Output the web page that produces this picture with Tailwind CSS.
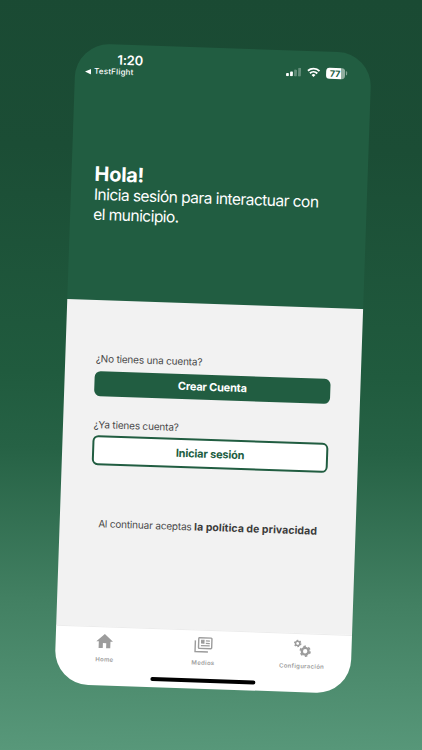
<!DOCTYPE html>
<html lang="es">
<head>
    <meta charset="UTF-8">
    <meta name="viewport" content="width=device-width, initial-scale=1.0">
    <title>Inicia sesión</title>
    <script src="https://cdn.jsdelivr.net/npm/@tailwindcss/browser@4"></script>
</head>
<body class="font-['Inter',sans-serif] antialiased">

    <div class="w-[422px] h-[750px] overflow-hidden pt-[48px] pl-[65px] bg-[linear-gradient(181deg,#1a4a33_0%,#1b4d35_20%,#205b3e_50%,#266245_60%,#428062_80%,#58987a_100%)]">

        <!-- Teléfono inclinado -->
        <div class="w-[296px] h-[641px] rotate-[1.95deg] rounded-[34px] overflow-hidden flex flex-col bg-[linear-gradient(#215d41_255.5px,#f2f2f2_256.5px,#f2f2f2_581.5px,#fff_582.5px)]">

            <!-- Cabecera -->
            <header class="h-[256px] shrink-0 text-white">
                <div class="h-[120px] flex justify-between">
                    <div class="pt-[8px] pl-[10px]">
                        <p class="pl-[32px] text-[13px] leading-[15px] font-semibold tracking-[-0.15px]">1:20</p>
                        <div class="flex items-center gap-[3px] h-[9px]">
                            <svg class="w-[6px] h-[6px]" viewBox="0 0 6 6" fill="currentColor"><path d="M0 3 6 .2v5.6z"/></svg>
                            <span class="text-[8px] leading-[9px] font-medium tracking-[0.2px]">TestFlight</span>
                        </div>
                    </div>
                    <div class="flex items-center gap-[6px] h-[12px] mt-[15px] mr-[24px]">
                        <svg class="w-[15px] h-[9px]" viewBox="0 0 15 9" fill="currentColor">
                            <rect x="0" y="5.6" width="2.8" height="3.2" rx=".8"/>
                            <rect x="4" y="4" width="2.8" height="4.8" rx=".8"/>
                            <rect x="8" y="2" width="2.8" height="6.8" rx=".8" opacity=".3"/>
                            <rect x="12" y="0" width="2.8" height="8.8" rx=".8" opacity=".3"/>
                        </svg>
                        <svg class="w-[13px] h-[10px]" viewBox="0 0 13 10" fill="none" stroke="currentColor" stroke-width="1.9">
                            <path d="M.7 3.7a8.3 8.3 0 0 1 11.6 0M2.8 6.1a5.3 5.3 0 0 1 7.4 0"/>
                            <path d="M6.5 9.8 4.5 7.8a2.9 2.9 0 0 1 4 0z" fill="currentColor" stroke="none"/>
                        </svg>
                        <div class="flex items-center gap-[0.5px]">
                            <div class="w-[19px] h-[11px] rounded-[3.5px] bg-[linear-gradient(90deg,#fff_77%,#90ae9f_77%)] text-[#215d41] text-[9px] leading-[11px] font-bold text-center pr-px">77</div>
                            <div class="w-[1.5px] h-[4px] rounded-r-full bg-[#90ae9f]"></div>
                        </div>
                    </div>
                </div>
                <div class="pl-[23px]">
                    <h1 class="text-[20px] leading-[21px] font-bold tracking-[-0.3px]">Hola!</h1>
                    <p class="text-[15.6px] leading-[19.5px] tracking-[-0.57px]">Inicia sesión para interactuar con<br>el municipio.</p>
                </div>
            </header>

            <!-- Acciones -->
            <main class="h-[326px] shrink-0 px-[30px] pt-[51px] text-[#4a4a4a]">
                <p class="text-[10px] leading-[14px] tracking-[-0.18px] pl-[0.5px]">¿No tienes una cuenta?</p>
                <button class="block w-[236px] h-[25px] mt-[6px] rounded-[6px] bg-[#215d41] text-white text-[11px] leading-[25px] font-bold tracking-[-0.2px]">Crear Cuenta</button>
                <p class="mt-[20.5px] text-[10px] leading-[14px] tracking-[-0.18px] pl-[0.5px]">¿Ya tienes cuenta?</p>
                <button class="block w-[236px] h-[30px] mt-[4.5px] rounded-[6px] border-2 border-[#215d41] bg-white text-[#215d41] text-[11px] leading-[26px] font-bold tracking-[-0.2px]">Iniciar sesión</button>
                <p class="mt-[51px] text-[10px] leading-[14px] text-center whitespace-nowrap tracking-[-0.18px]">Al continuar aceptas <b class="text-[10.5px] font-bold tracking-[0.05px] text-[#3c3c3c]">la política de privacidad</b></p>
            </main>

            <!-- Barra de pestañas -->
            <nav class="h-[59px] shrink-0 border-t border-[#ececec] text-[#9c9c9c]">
                <div class="grid grid-cols-3 pt-[3.5px] h-[48px] text-[6px] leading-[8px] font-semibold tracking-[0.3px]">
                    <div class="flex flex-col items-center">
                        <svg class="w-[20px] h-[20px]" viewBox="0 0 24 24" fill="currentColor"><path d="M10 20v-6h4v6h5v-8h3L12 3 2 12h3v8z"/></svg>
                        <span class="mt-[4px]">Home</span>
                    </div>
                    <div class="flex flex-col items-center">
                        <svg class="w-[20px] h-[20px]" viewBox="0 0 24 24" fill="none" stroke="currentColor" stroke-width="1.7">
                            <rect x="6" y="3.6" width="15.8" height="12.8" rx="1"/>
                            <path d="M2 7v13.4h15.5"/>
                            <path d="M9.4 6.6h3v3.4h-3z" fill="currentColor" stroke-width="1.2"/>
                            <path d="M14.6 7.2h4.8M14.6 10.2h4.8M8.8 13h10.6" stroke-width="1.4"/>
                        </svg>
                        <span class="mt-[4px]">Medios</span>
                    </div>
                    <div class="flex flex-col items-center">
                        <svg class="w-[20px] h-[20px]" viewBox="0 0 24 24" fill="none" stroke="currentColor">
                            <circle cx="6" cy="6.5" r="2.6" stroke-width="1.8"/>
                            <circle cx="6" cy="6.5" r="3.8" stroke-width="1.5" stroke-dasharray="2 1.98"/>
                            <circle cx="15.3" cy="15.5" r="4" stroke-width="2.8"/>
                            <circle cx="15.3" cy="15.5" r="5.8" stroke-width="2" stroke-dasharray="3 3.07"/>
                        </svg>
                        <span class="mt-[4px]">Configuración</span>
                    </div>
                </div>
                <div class="w-[105px] h-[4px] mx-auto rounded-full bg-black"></div>
            </nav>
        </div>
    </div>

</body>
</html>
